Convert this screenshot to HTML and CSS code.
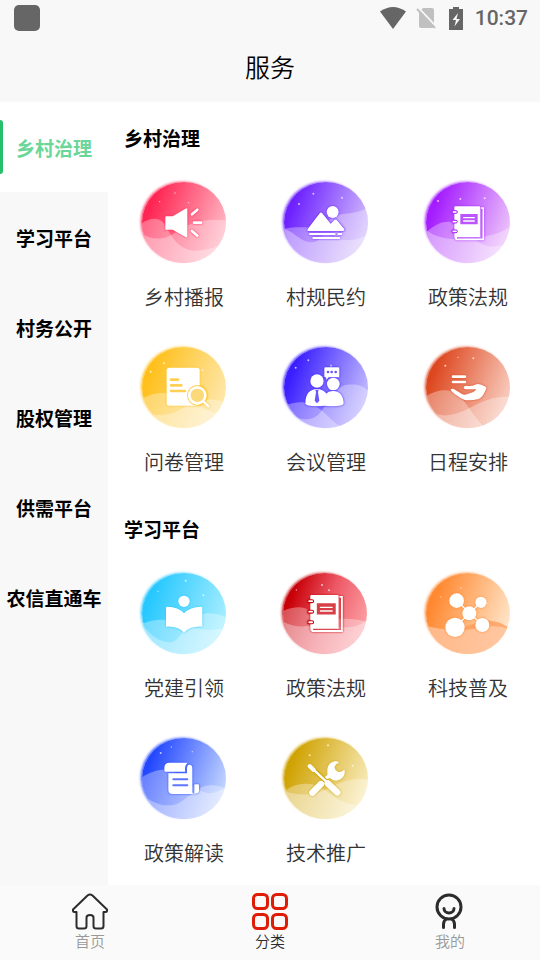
FILE: index.html
```
<!DOCTYPE html>
<html lang="zh-CN">
<head>
  <meta charset="UTF-8" />
  <meta name="viewport" content="width=device-width, initial-scale=1.0"/>
  <title>服务</title>
  <link rel="stylesheet" href="styles.css">
</head>
<body>

  <!-- Notebook shared by both 政策法规 icons -->
  <svg class="sprite" aria-hidden="true">
    <symbol id="notebook" viewBox="545 105 100 106">
      <path class="line" stroke-width="5" d="M637 113h5v94h-81"/>
      <path d="M558 108h72q3 0 3 3v90h-70v8q-8-1-8-8v-90q0-3 3-3z"/>
      <path class="tint" d="M573 131h52v31h-52z"/>
      <path class="line" stroke-width="4" d="M583 142h32M583 152h32"/>
      <g class="ring" stroke-width="3">
        <rect x="548" y="121" width="16" height="8" rx="4"/>
        <rect x="548" y="150" width="16" height="8" rx="4"/>
        <rect x="548" y="179" width="16" height="8" rx="4"/>
      </g>
    </symbol>
  </svg>

  <div class="app">
    <div class="status-bar">
      <span class="status-app"></span>
      <div class="status-icons">
        <svg width="26" height="22" viewBox="0 0 26 22"><path fill="#666" d="M0 4.500Q13-4.500 26 4.500L13 22z"/></svg>
        <svg width="20" height="22" viewBox="0 0 20 22">
          <path fill="#c0c0c0" d="M7 1h9q2 0 2 2v16q0 2-2 2H5q-2 0-2-2V5z"/>
          <path stroke="#f8f8f8" stroke-width="2" d="M2.500 1L20 19.500"/>
          <path stroke="#c0c0c0" stroke-width="2" d="M1 2l18 19"/>
        </svg>
        <svg class="battery" width="14" height="23" viewBox="0 0 14 23">
          <path fill="#666" d="M4 0h6v2h4v21H0V2h4z"/>
          <path fill="#f8f8f8" d="M9 6l-5.500 7H7l-1.500 6.500L11 12H7.500z"/>
        </svg>
        <span class="status-time">10:37</span>
      </div>
    </div>

    <header class="header">
      <h1>服务</h1>
    </header>

    <div class="main">
      <!-- Category sidebar -->
      <nav class="sidebar">
        <button type="button" class="side-item active">乡村治理</button>
        <button type="button" class="side-item">学习平台</button>
        <button type="button" class="side-item">村务公开</button>
        <button type="button" class="side-item">股权管理</button>
        <button type="button" class="side-item">供需平台</button>
        <button type="button" class="side-item">农信直通车</button>
      </nav>

      <main class="content">
        <section>
          <h2>乡村治理</h2>
          <div class="grid">
            <a class="service" href="#">
              <span class="disc red">
                <svg viewBox="38 35 252 243">
                  <path class="wave" d="M38 158C60 143 90 138 105 160S140 240 200 241C240 240 270 228 290 212V290H38z"/>
                  <path class="wave" d="M38 190C60 205 100 212 130 192S200 140 290 150V290H38z"/>
                  <g class="stars"><circle cx="91" cy="94" r="2"/><circle cx="137" cy="68" r="2"/><circle cx="178" cy="97" r="2"/></g>
                  <g class="glyph">
                    <path d="M111 138h19l38-23q6-4 6 2v80q0 6-6 3l-38-22h-19q-3 0-3-3v-34q0-3 3-3z"/>
                    <path class="line" stroke-width="8" d="M188 132l16-14M194 157h21M188 182l16 14"/>
                  </g>
                </svg>
              </span>
              乡村播报
            </a>
            <a class="service" href="#">
              <span class="disc violet">
                <svg viewBox="44 35 252 243">
                  <path class="wave" d="M44 175C75 168 100 172 130 170S190 138 210 133S270 130 296 110V290H44z"/>
                  <path class="wave" d="M44 176C70 180 95 216 125 216S150 195 170 195S235 230 296 192V290H44z"/>
                  <g class="stars"><circle cx="89" cy="101" r="3"/><circle cx="132" cy="70" r="3"/><circle cx="218" cy="82" r="3"/></g>
                  <g class="glyph">
                    <circle cx="190" cy="125" r="18"/>
                    <path class="gap" stroke-width="3" d="M115 176l35-46q5-7 10 0l24 30 10-10q5-5 9 0l22 26q2 6-4 6H118q-6 0-3-6z"/>
                    <path class="line" stroke-width="6" d="M122 191h74M207 191h9M132 203h78"/>
                  </g>
                </svg>
              </span>
              村规民约
            </a>
            <a class="service" href="#">
              <span class="disc purple">
                <svg viewBox="470 35 252 243">
                  <path class="wave" d="M470 186C500 160 520 152 550 155C590 165 610 210 640 222S690 228 722 215V290H470z"/>
                  <path class="wave" d="M470 180C500 200 530 208 570 206S680 200 722 170V290H470z"/>
                  <g class="stars"><circle cx="506" cy="92" r="3"/><circle cx="573" cy="86" r="3"/><circle cx="646" cy="84" r="3"/></g>
                  <use class="glyph" href="#notebook" x="545" y="105" width="100" height="106"/>
                </svg>
              </span>
              政策法规
            </a>
            <a class="service" href="#">
              <span class="disc yellow">
                <svg viewBox="38 35 252 243">
                  <path class="wave" d="M38 190C80 168 110 170 150 182S220 230 290 240V290H38z"/>
                  <path class="wave" d="M38 228C80 245 120 242 155 222S230 180 290 202V290H38z"/>
                  <g class="stars"><circle cx="64" cy="109" r="3"/><circle cx="104" cy="84" r="3"/><circle cx="219" cy="105" r="3"/></g>
                  <g class="glyph">
                    <rect x="112" y="97" width="99" height="114" rx="8"/>
                    <path class="tint-line" stroke-width="8" d="M125 133h21M125 150h31M125 167h42"/>
                    <circle class="tint" cx="204" cy="180" r="31"/>
                    <path class="line" stroke-width="7" d="M222 198l15 15"/>
                    <circle cx="204" cy="180" r="28"/>
                    <circle fill="#fbd978" cx="204" cy="180" r="20"/>
                  </g>
                </svg>
              </span>
              问卷管理
            </a>
            <a class="service" href="#">
              <span class="disc indigo">
                <svg viewBox="44 35 252 243">
                  <path class="wave" d="M44 212C90 192 120 200 150 220S190 265 225 278V290H44z"/>
                  <path class="wave" d="M44 230C80 250 120 262 145 240S195 150 235 148S280 155 296 165V290H44z"/>
                  <g class="stars"><circle cx="79" cy="97" r="3"/><circle cx="117" cy="75" r="3"/><circle cx="185" cy="91" r="3"/></g>
                  <g class="glyph">
                    <circle cx="143" cy="137" r="20"/>
                    <path d="M108 204C108 175 122 161 143 161S178 175 178 204q0 9-35 9t-35-9z"/>
                    <path class="tint" d="M138 163h10l-2 8 4 25-7 8-7-8 4-25z"/>
                    <circle cx="192" cy="146" r="19"/>
                    <path d="M160 204C160 181 172 167 192 167S223 183 223 204q0 9-34 9t-29-9z"/>
                    <path d="M168 96h39q3 0 3 3v24q0 3-3 3h-29l-7 7-1-7h-2q-3 0-3-3V99q0-3 3-3z"/>
                    <g class="tint"><circle cx="176" cy="110" r="4"/><circle cx="187" cy="110" r="4"/><circle cx="199" cy="110" r="4"/></g>
                  </g>
                </svg>
              </span>
              会议管理
            </a>
            <a class="service" href="#">
              <span class="disc orange-red">
                <svg viewBox="470 35 252 243">
                  <path class="wave" d="M470 182C510 160 540 160 565 178S610 240 640 270V290H470z"/>
                  <path class="wave" d="M470 225C510 245 540 245 580 228S660 180 722 185V290H470z"/>
                  <g class="stars"><circle cx="528" cy="91" r="3"/><circle cx="566" cy="66" r="2"/><circle cx="612" cy="69" r="3"/></g>
                  <g class="glyph">
                    <path class="line" stroke-width="8" d="M551 124h36M551 140h36"/>
                    <path d="M545 161q8-2 13 3l20 12q6 4 14 1l20-7q8-4 8-8h-31q-7-1-6-6t8-5q18 3 30-4 10-3 28 7 4 3 1 8-10 25-22 29-22 5-42 3-12-4-20-11-10-6-20-16-4-4-1-6z"/>
                  </g>
                </svg>
              </span>
              日程安排
            </a>
          </div>
        </section>

        <section>
          <h2>学习平台</h2>
          <div class="grid">
            <a class="service" href="#">
              <span class="disc cyan">
                <svg viewBox="38 37 252 243">
                  <path class="wave" d="M38 190C80 172 110 175 150 188S230 218 290 200V290H38z"/>
                  <path class="wave" d="M38 190C60 220 90 245 120 245S160 205 185 180S250 150 290 170V290H38z"/>
                  <g class="stars"><circle cx="86" cy="92" r="2"/><circle cx="169" cy="60" r="3"/><circle cx="222" cy="104" r="3"/></g>
                  <g class="glyph">
                    <circle cx="164" cy="122" r="17"/>
                    <path d="M110 142q0-4 4-4 33 0 50 20 18-20 51-20 4 0 4 4v56q-38-2-55 18-16-20-54-18z"/>
                  </g>
                </svg>
              </span>
              党建引领
            </a>
            <a class="service" href="#">
              <span class="disc crimson">
                <svg viewBox="40 35 252 243">
                  <path class="wave" d="M38 150C70 135 105 133 120 150S175 200 225 198S275 185 292 176V290H38z"/>
                  <path class="wave" d="M38 180C70 198 110 200 150 186S240 165 292 182V290H38z"/>
                  <g class="stars"><circle cx="80" cy="86" r="2"/><circle cx="157" cy="71" r="3"/><circle cx="178" cy="87" r="3"/></g>
                  <use class="glyph" href="#notebook" x="111" y="97" width="109" height="117"/>
                </svg>
              </span>
              政策法规
            </a>
            <a class="service" href="#">
              <span class="disc orange">
                <svg viewBox="470 37 252 243">
                  <path fill="#ff9a58" opacity=".75" d="M470 194C500 205 530 212 565 205S630 175 665 180S700 193 722 200V290H470z"/>
                  <path class="wave" d="M470 195C520 210 570 210 610 205S665 190 722 205V290H470z"/>
                  <g class="stars"><circle cx="515" cy="109" r="2"/><circle cx="575" cy="82" r="2"/><circle cx="654" cy="128" r="2"/></g>
                  <g class="glyph">
                    <path class="line" stroke-width="4" d="M562 120l77 73M635 125l-78 75"/>
                    <circle cx="562" cy="120" r="22"/>
                    <circle cx="635" cy="125" r="17"/>
                    <circle cx="600" cy="158" r="21"/>
                    <circle cx="557" cy="200" r="29"/>
                    <circle cx="639" cy="193" r="21"/>
                  </g>
                </svg>
              </span>
              科技普及
            </a>
            <a class="service" href="#">
              <span class="disc blue">
                <svg viewBox="38 28 252 243">
                  <path class="wave" d="M38 146C70 125 105 118 130 128S170 165 210 185S265 185 290 178V290H38z"/>
                  <path class="wave" d="M38 195C75 230 120 238 150 222S210 165 250 170S280 178 290 182V290H38z"/>
                  <g class="stars"><circle cx="94" cy="73" r="3"/><circle cx="126" cy="55" r="2"/><circle cx="189" cy="69" r="2"/></g>
                  <g class="glyph">
                    <path d="M105 126v-8q0-16 16-16h53q-7 8-7 18v9h-58q-4 0-4-3z"/>
                    <path d="M117 134h56v-14q0-12 8-12t8 12v70q0 6 5 6h-64q-13 0-13-13z"/>
                    <path d="M197 167h9q3 0 3 3v17q0 8-14 8v-25q0-3 2-3z"/>
                    <path class="tint-line" stroke-width="6" d="M132 152h42M132 170h42"/>
                  </g>
                </svg>
              </span>
              政策解读
            </a>
            <a class="service" href="#">
              <span class="disc gold">
                <svg viewBox="464 28 252 243">
                  <path class="wave" d="M464 188C500 162 540 160 570 175S620 215 660 225S700 225 716 215V290H464z"/>
                  <path class="wave" d="M464 186C500 200 540 202 575 188S650 145 716 152V290H464z"/>
                  <g class="stars"><circle cx="541" cy="80" r="3"/><circle cx="596" cy="50" r="3"/><circle cx="670" cy="111" r="3"/></g>
                  <g class="glyph">
                    <path class="line" stroke-width="19" d="M549 192l26-26"/>
                    <path d="M628 99A26 26 0 0 0 594 126V138L586 146L592 152L602 148A26 26 0 0 0 645 122Q637 132 626 129Q614 122 616 114Q618 107 628 102z"/>
                    <path class="tint-line" stroke-width="12" d="M552 122l45 42"/>
                    <path class="line" stroke-width="12" d="M541 112l12 12"/>
                    <path class="line" stroke-width="7" d="M552 122l42 40"/>
                    <path class="line" stroke-width="19" d="M595 164l29 27"/>
                  </g>
                </svg>
              </span>
              技术推广
            </a>
          </div>
        </section>
      </main>
    </div>

    <!-- Bottom tabs -->
    <nav class="tab-bar">
      <a class="tab" href="#">
        <svg width="36" height="37" viewBox="0 0 36 37" fill="none" stroke="#2c2c2c" stroke-width="2" stroke-linejoin="round">
          <path d="M4.500 19v14q0 2.500 2.500 2.500h5q2.500 0 2.500-2.500v-8.500q0-2.500 3.500-2.500t3.500 2.500v8.500q0 2.500 2.500 2.500h5q2.500 0 2.500-2.500V19h2q1.500 0 1.500-1.500v-1L20.500 2.500q-2.500-1.800-5 0L1 16.500v1Q1 19 2.500 19z"/>
        </svg>
        首页
      </a>
      <a class="tab active" href="#">
        <svg width="36" height="37" viewBox="0 0 36 37" fill="none" stroke="#df1c06" stroke-width="3">
          <rect x="1.500" y="1.500" width="14" height="14" rx="4"/>
          <rect x="20.500" y="1.500" width="14" height="14" rx="4"/>
          <rect x="1.500" y="21.500" width="14" height="14" rx="4"/>
          <rect x="20.500" y="21.500" width="14" height="14" rx="4"/>
        </svg>
        分类
      </a>
      <a class="tab" href="#">
        <svg width="36" height="37" viewBox="0 0 36 37" fill="none" stroke="#2c2c2c" stroke-width="3" stroke-linecap="round">
          <circle cx="17" cy="14" r="12"/>
          <path d="M12 15.500a5 4.500 0 0 0 10 0M11.500 34.500v-3q0-4 3-5.500M22.500 34.500v-3q0-4-3-5.500"/>
        </svg>
        我的
      </a>
    </nav>
  </div>

</body>
</html>
```
FILE: styles.css
```
* {
  box-sizing: border-box;
}
body {
  margin: 0;
  font-family: "Noto Sans CJK SC", sans-serif;
  background: #fff;
  color: #000;
}
a {
  color: inherit;
  text-decoration: none;
}
.sprite {
  position: absolute;
  width: 0;
  height: 0;
}
.app {
  display: flex;
  flex-direction: column;
  min-height: 100vh;
}

/* Status bar and header */
.status-bar {
  display: flex;
  justify-content: space-between;
  align-items: center;
  height: 36px;
  padding: 0 12px 0 14px;
  background: #f8f8f8;
}
.status-app {
  width: 26px;
  height: 26px;
  border-radius: 5px;
  background: #666;
}
.status-icons {
  display: flex;
  align-items: center;
  gap: 10px;
}
.battery {
  margin: 0 2px 0 3px;
}
.status-time {
  font: 500 21px/36px Roboto, sans-serif;
  color: #666;
}
.header {
  padding-bottom: 6px;
  background: #f8f8f8;
  text-align: center;
}
.header h1 {
  margin: 0;
  font-size: 25px;
  font-weight: 350;
  line-height: 60px;
}

/* Sidebar */
.main {
  display: flex;
  flex: 1;
}
.sidebar {
  flex: 0 0 20%;
  background: #f8f8f8;
}
.side-item {
  display: block;
  position: relative;
  width: 100%;
  height: 90px;
  padding: 0;
  border: none;
  background: none;
  font-family: inherit;
  font-size: 19px;
  font-weight: 700;
  color: #000;
  cursor: pointer;
}
.side-item.active {
  background: #fff;
  color: #6bd69a;
}
.side-item.active::before {
  content: "";
  position: absolute;
  left: 0;
  top: 18px;
  width: 3px;
  height: 54px;
  border-radius: 0 3px 3px 0;
  background: #26bf6c;
}

/* Service groups */
.content {
  flex: 1;
}
.content h2 {
  margin: 0;
  padding: 22px 16px 11px;
  font-size: 19px;
  font-weight: 700;
  line-height: 28px;
}
.grid {
  display: grid;
  grid-template-columns: repeat(3, 1fr);
  padding: 0 1px 0 5px;
}
.service {
  display: flex;
  flex-direction: column;
  align-items: center;
  gap: 19px;
  padding: 19px 0 16px;
  font-size: 20px;
  font-weight: 350;
  line-height: 30px;
  color: #333;
}
.disc {
  width: 84px;
  height: 81px;
  border-radius: 50%;
  overflow: hidden;
  background: linear-gradient(110deg, var(--from) 15%, var(--to) 95%);
  box-shadow: -2px -1px 3px -1px var(--from);
}
.disc svg {
  display: block;
  width: 100%;
  height: 100%;
}
.red { --from: #ff2452; --to: #ffc4cd; }
.violet { --from: #6d22ff; --to: #dccbfc; }
.purple { --from: #a41cff; --to: #f2cffa; }
.yellow { --from: #ffc01c; --to: #feeab4; }
.indigo { --from: #3a1eff; --to: #cdc8ff; }
.orange-red { --from: #dd4820; --to: #fbd6ca; }
.cyan { --from: #27c8ff; --to: #b2f1ff; }
.crimson { --from: #c80008; --to: #ffa8ac; }
.orange { --from: #ff8830; --to: #ffecd4; }
.blue { --from: #2448ff; --to: #cfe0ff; }
.gold { --from: #d0a304; --to: #fcf1c8; }
.crimson {
  background: linear-gradient(110deg, var(--from) 15%, #ec5764 50%, var(--to) 95%);
  margin-right: 2px;
}

.wave {
  fill: #fff;
  opacity: 0.32;
}
.stars {
  fill: #fff;
  opacity: 0.7;
}
.glyph {
  fill: #fff;
  filter: drop-shadow(0 0 3px var(--from));
}
.line {
  fill: none;
  stroke: #fff;
  stroke-linecap: round;
}
.tint {
  fill: var(--from);
  opacity: 0.75;
}
.tint-line {
  fill: none;
  stroke: var(--from);
  stroke-linecap: round;
  opacity: 0.75;
}
.ring {
  stroke: var(--from);
}
.gap {
  stroke: var(--from);
  stroke-opacity: 0.4;
  paint-order: stroke;
}

/* Bottom tabs */
.tab-bar {
  display: flex;
  padding: 8px 0;
  background: #fafafa;
}
.tab {
  display: flex;
  flex: 1;
  flex-direction: column;
  align-items: center;
  font-size: 15px;
  font-weight: 350;
  line-height: 22px;
  color: #999;
}
.tab.active {
  color: #2c2c2c;
}
```
